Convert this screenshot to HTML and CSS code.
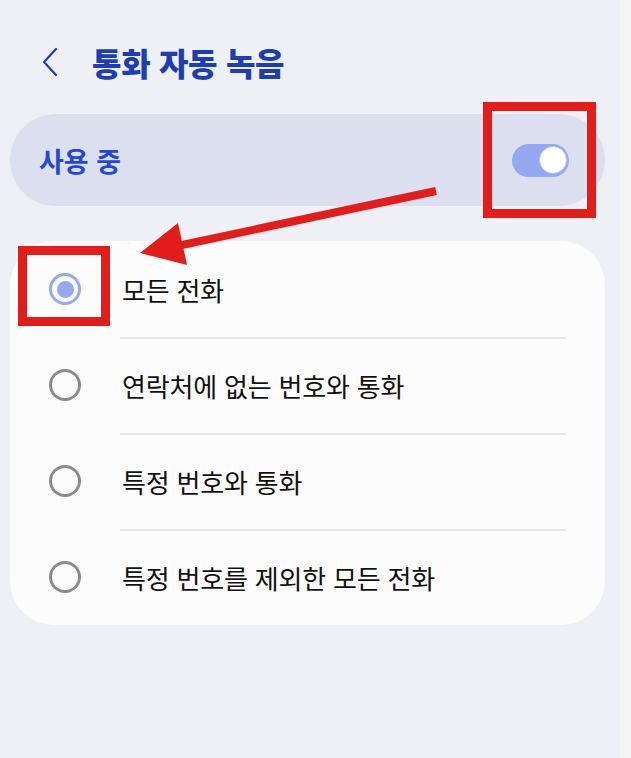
FILE: index.html
```html
<!DOCTYPE html>
<html lang="ko">
<head>
  <meta charset="UTF-8" />
  <meta name="viewport" content="width=device-width, initial-scale=1.0"/>
  <title>통화 자동 녹음</title>
  <link rel="stylesheet" href="styles.css">
</head>
<body>

  <div class="screen">
    <main class="page">
      <!-- Top bar -->
      <header class="top-bar">
        <button class="back-btn" aria-label="뒤로">
          <svg width="18" height="30" viewBox="0 0 18 30">
            <polyline points="15,2 3,15 15,28" fill="none" stroke="#1e3cb4" stroke-width="2.2" stroke-linecap="round" stroke-linejoin="round"/>
          </svg>
        </button>
        <h1>통화 자동 녹음</h1>
      </header>

      <!-- Master switch -->
      <div class="master-switch">
        <span>사용 중</span>
        <div class="switch on"><div class="knob"></div></div>
      </div>

      <!-- Options -->
      <ul class="options">
        <li class="option selected">
          <span class="radio"></span>
          <span class="label">모든 전화</span>
        </li>
        <li class="option">
          <span class="radio"></span>
          <span class="label">연락처에 없는 번호와 통화</span>
        </li>
        <li class="option">
          <span class="radio"></span>
          <span class="label">특정 번호와 통화</span>
        </li>
        <li class="option">
          <span class="radio"></span>
          <span class="label">특정 번호를 제외한 모든 전화</span>
        </li>
      </ul>
    </main>
    <div class="scroll-strip"></div>
  </div>

  <!-- Annotation marks -->
  <svg class="marks" width="631" height="758" viewBox="0 0 631 758">
    <rect x="487.5" y="106.5" width="104" height="107" fill="none" stroke="#e31c1c" stroke-width="9"/>
    <rect x="22.5" y="250.5" width="83" height="71" fill="none" stroke="#e31c1c" stroke-width="9"/>
    <line x1="436" y1="191" x2="168" y2="248" stroke="#e31c1c" stroke-width="8"/>
    <polygon points="140,253 178,223 187,265" fill="#e31c1c"/>
  </svg>

</body>
</html>
```

FILE: styles.css
```css
* {
  box-sizing: border-box;
}

body {
  margin: 0;
  padding: 0;
  font-family: 'Noto Sans CJK KR', 'Noto Sans', sans-serif;
  background: #eff0f5;
  color: #111;
  height: 100vh;
  overflow: hidden;
  position: relative;
}

.screen {
  display: flex;
  height: 100vh;
}

.page {
  flex: 1;
  padding: 0 15px 0 10px;
}

.scroll-strip {
  width: 11px;
  background: #f5f5f6;
}

/* Top bar */
.top-bar {
  height: 114px;
  display: flex;
  align-items: center;
  padding: 10px 0 0 31px;
}

.back-btn {
  background: none;
  border: none;
  padding: 0;
  margin-right: 33px;
  display: flex;
  cursor: pointer;
}

.top-bar h1 {
  margin: 0;
  font-size: 32px;
  font-weight: 900;
  color: #1e3cb4;
  letter-spacing: -0.3px;
}

/* Master switch card */
.master-switch {
  height: 92px;
  border-radius: 46px;
  background: #dbdff0;
  display: flex;
  align-items: center;
  justify-content: space-between;
  padding: 0 36px 0 29px;
}

.master-switch span {
  font-size: 27px;
  font-weight: 700;
  color: #2747d2;
}

.switch {
  width: 57px;
  height: 33px;
  border-radius: 17px;
  background: #95a8f0;
  display: flex;
  align-items: center;
  justify-content: flex-end;
  padding-right: 2px;
}

.knob {
  width: 28px;
  height: 28px;
  border-radius: 50%;
  background: #fff;
  border: 1px solid #b7c3f4;
}

/* Option list */
.options {
  list-style: none;
  margin: 35px 0 0;
  padding: 0;
  background: #fcfcfc;
  border-radius: 44px;
}

.option {
  height: 96px;
  display: flex;
  align-items: center;
  padding-left: 39px;
  position: relative;
}

.option + .option::before {
  content: "";
  position: absolute;
  top: 0;
  left: 110px;
  right: 39px;
  height: 1.5px;
  background: #e6e6e9;
}

.radio {
  width: 32px;
  height: 32px;
  border-radius: 50%;
  border: 3px solid #8c8c8c;
  margin-right: 41px;
  display: flex;
  align-items: center;
  justify-content: center;
  flex-shrink: 0;
}

.option.selected .radio {
  border-color: #95a8f0;
}

.option.selected .radio::after {
  content: "";
  width: 17px;
  height: 17px;
  border-radius: 50%;
  background: #95a8f0;
}

.label {
  font-size: 26px;
  font-weight: 400;
  color: #111;
  letter-spacing: -0.2px;
}

/* Red annotation layer */
.marks {
  position: absolute;
  top: 0;
  left: 0;
  pointer-events: none;
}
```
